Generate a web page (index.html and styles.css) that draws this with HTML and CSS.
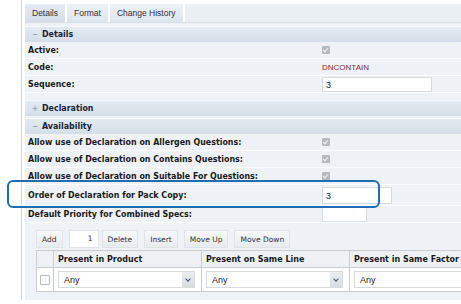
FILE: index.html
```html
<!DOCTYPE html>
<html lang="en">
<head>
    <meta charset="UTF-8">
    <title>Declaration</title>
    <link rel="stylesheet" href="styles.css">
</head>
<body>
    <div class="frame">
        <div class="tabs">
            <div class="tab active">Details</div>
            <div class="tab">Format</div>
            <div class="tab">Change History</div>
        </div>

        <div class="panel">
            <div class="section first">
                <div class="section-head"><span class="toggle">&minus;</span>Details</div>
                <div class="row"><div class="label">Active:</div><div class="value"><span class="check"></span></div></div>
                <div class="row"><div class="label">Code:</div><div class="value code">DNCONTAIN</div></div>
                <div class="row"><div class="label">Sequence:</div><div class="value"><span class="input wide">3</span></div></div>
            </div>

            <div class="section">
                <div class="section-head"><span class="toggle">+</span>Declaration</div>
            </div>

            <div class="section">
                <div class="section-head"><span class="toggle">&minus;</span>Availability</div>
                <div class="row"><div class="label">Allow use of Declaration on Allergen Questions:</div><div class="value"><span class="check"></span></div></div>
                <div class="row"><div class="label">Allow use of Declaration on Contains Questions:</div><div class="value"><span class="check"></span></div></div>
                <div class="row"><div class="label">Allow use of Declaration on Suitable For Questions:</div><div class="value"><span class="check"></span></div></div>
                <div class="row tall"><div class="label">Order of Declaration for Pack Copy:</div><div class="value"><span class="input mid">3</span></div></div>
                <div class="row"><div class="label">Default Priority for Combined Specs:</div><div class="value"><span class="input small"></span></div></div>

                <div class="grid-area">
                    <div class="toolbar">
                        <button>Add</button>
                        <span class="count">1</span>
                        <button>Delete</button>
                        <button>Insert</button>
                        <button>Move Up</button>
                        <button>Move Down</button>
                    </div>
                    <div class="grid">
                        <div class="grid-row head">
                            <div class="cell sel"></div>
                            <div class="cell col">Present in Product</div>
                            <div class="cell col">Present on Same Line</div>
                            <div class="cell col">Present in Same Factor</div>
                        </div>
                        <div class="grid-row">
                            <div class="cell sel"><span class="box"></span></div>
                            <div class="cell col"><span class="select">Any<span class="arrow"></span></span></div>
                            <div class="cell col"><span class="select">Any<span class="arrow"></span></span></div>
                            <div class="cell col"><span class="select">Any<span class="arrow"></span></span></div>
                        </div>
                    </div>
                </div>
            </div>
        </div>

        <div class="callout"></div>
    </div>
</body>
</html>
```

FILE: styles.css
```css
body {
    margin: 0;
    background-color: #ffffff;
    font-family: "DejaVu Sans", Verdana, sans-serif;
    overflow: hidden;
}

.frame {
    position: relative;
    margin-left: 21px;
    border-left: 1px solid #d3d9df;
    padding: 4px 0 0 3px;
    height: 300px;
    box-sizing: border-box;
}

.tabs {
    display: flex;
    height: 18px;
    background-color: #eaeff4;
    border-bottom: 1px solid #d6dde4;
}

.tab {
    font-family: "Liberation Sans", Arial, sans-serif;
    font-size: 8.5px;
    color: #333;
    padding: 0 7px;
    line-height: 18px;
    background: linear-gradient(#eef2f6, #dde5ed);
    border-right: 2px solid #ffffff;
}

.tab.active {
    background: linear-gradient(#e4ebf2, #d4dde7);
}

.panel {
    background-color: #eef2f6;
    padding-top: 3px;
    height: 276px;
    border-bottom: 1px solid #dde2e7;
    overflow: hidden;
}

.section {
    margin-bottom: 2px;
}

.section.first {
    margin-bottom: 7px;
}

.section-head {
    height: 15px;
    line-height: 15px;
    font-family: "DejaVu Sans Condensed", "DejaVu Sans", sans-serif;
    font-size: 8.8px;
    font-weight: bold;
    color: #1a2430;
    background: linear-gradient(#e3eaf1, #d5dee8);
    border-top: 1px solid #f7f9fb;
    padding-left: 3px;
}

.toggle {
    display: inline-block;
    width: 14px;
    color: #9aa6b3;
    font-size: 8px;
    text-align: center;
}

.row {
    display: flex;
    align-items: center;
    height: 16px;
    border-bottom: 1px solid #ffffff;
    font-family: "DejaVu Sans Condensed", "DejaVu Sans", sans-serif;
    font-size: 8.8px;
}

.row.tall {
    height: 20px;
}

.label {
    width: 294px;
    padding-left: 3px;
    font-weight: bold;
    color: #1a1a1a;
    white-space: nowrap;
    overflow: hidden;
}

.value {
    display: flex;
    align-items: center;
}

.code {
    font-family: "Liberation Sans", Arial, sans-serif;
    font-size: 8px;
    color: #7a2e2e;
}

.check {
    display: inline-block;
    width: 8px;
    height: 8px;
    background-color: #b4b9be;
    border-radius: 1px;
    position: relative;
}

.check::after {
    content: "";
    position: absolute;
    left: 2px;
    top: 1px;
    width: 2px;
    height: 4px;
    border: solid #f4f4f4;
    border-width: 0 1px 1px 0;
    transform: rotate(40deg);
}

.input {
    display: inline-block;
    height: 15px;
    line-height: 14px;
    background-color: #ffffff;
    border: 1px solid #d6dbe0;
    box-sizing: border-box;
    padding-left: 3px;
    font-family: "Liberation Sans", Arial, sans-serif;
    font-size: 9px;
    color: #222;
}

.input.wide {
    width: 110px;
}

.input.mid {
    width: 70px;
    height: 17px;
    line-height: 16px;
}

.input.small {
    width: 45px;
}

.grid-area {
    padding: 7px 0 0 11px;
}

.toolbar {
    display: flex;
    align-items: center;
    gap: 6px;
    margin-bottom: 2px;
}

.toolbar button, .toolbar .count {
    font-family: "DejaVu Sans", Verdana, sans-serif;
    font-size: 7.5px;
    color: #333;
    background: linear-gradient(#f7f8fa, #e7eaee);
    border: 1px solid #e0e3e7;
    height: 18px;
    padding: 0 5px;
    margin: 0;
}

.toolbar .count {
    background: #ffffff;
    width: 30px;
    box-sizing: border-box;
    text-align: right;
    line-height: 16px;
    margin-right: -3px;
}

.grid {
    border: 1px solid #c9cdd2;
    border-right: none;
    background-color: #ffffff;
    overflow: hidden;
}

.grid-row {
    display: flex;
    height: 16px;
}

.grid-row.head {
    background-color: #eef1f4;
    border-bottom: 1px solid #c9cdd2;
}

.grid-row:not(.head) {
    height: 23px;
}

.cell {
    display: flex;
    align-items: center;
    border-right: 1px solid #c9cdd2;
    box-sizing: border-box;
    font-size: 8px;
    font-weight: bold;
    color: #1a1a1a;
    white-space: nowrap;
    flex-shrink: 0;
}

.cell.sel {
    width: 17px;
    justify-content: center;
}

.cell.col {
    width: 148px;
    padding: 0 6px 0 4px;
}

.box {
    display: inline-block;
    width: 8px;
    height: 8px;
    border: 1px solid #b8bec4;
    background: #fbfbfb;
    border-radius: 1px;
}

.select {
    display: flex;
    align-items: center;
    justify-content: space-between;
    width: 100%;
    height: 17px;
    border: 1px solid #d6dbe0;
    box-sizing: border-box;
    padding-left: 5px;
    font-family: "Liberation Sans", Arial, sans-serif;
    font-size: 9px;
    font-weight: normal;
    color: #222;
}

.arrow {
    width: 12px;
    height: 15px;
    background: linear-gradient(#eceef1, #d8dce1);
    position: relative;
}

.arrow::after {
    content: "";
    position: absolute;
    left: 4px;
    top: 5px;
    width: 3px;
    height: 3px;
    border: solid #40536a;
    border-width: 0 1px 1px 0;
    transform: rotate(45deg);
}

/* annotation box drawn over the form */
.callout {
    position: absolute;
    left: -15px;
    top: 180px;
    width: 373px;
    height: 28px;
    border: 2px solid #1f6db5;
    border-radius: 6px;
    box-sizing: border-box;
}
```
